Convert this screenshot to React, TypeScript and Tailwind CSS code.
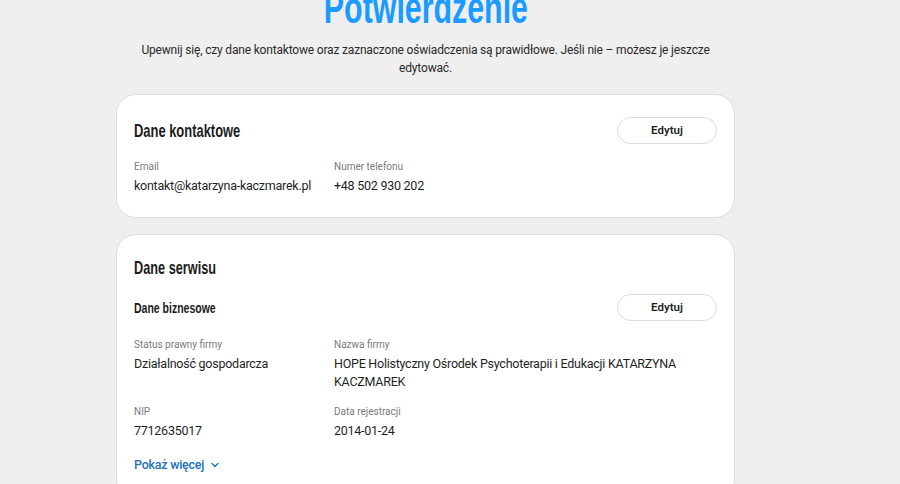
import React from 'react';
import { ChevronDown } from 'lucide-react';

const headingFont = "font-['Liberation_Sans','Arial',sans-serif] font-bold";
const body = "font-['Roboto','Liberation_Sans',sans-serif]";

const Field: React.FC<{ label: string; value: string }> = ({ label, value }) => (
  <div>
    <div className="text-[10px] text-[#7a7a7a] leading-[14px]">{label}</div>
    <div className="mt-[3px] text-[12.5px] tracking-[-0.02em] text-[#1f1f1f] leading-[18px]">{value}</div>
  </div>
);

const EditButton: React.FC = () => (
  <button className="h-[27px] w-[100px] rounded-full border border-[#dcdcdc] bg-white text-[11.5px] font-semibold text-[#1f1f1f]">
    Edytuj
  </button>
);

const App: React.FC = () => {
  return (
    <div className={`h-[484px] overflow-hidden bg-[#efefef] ${body}`}>
      <div className="ml-[116px] w-[619px] -mt-[16px]">
        <h1 className="text-center text-[44px] leading-[48px]">
          <span className={`inline-block origin-center scale-x-[0.69] ${headingFont} text-[#1b9bff]`}>Potwierdzenie</span>
        </h1>
        <p className="mt-[9px] px-[12px] text-center text-[12px] tracking-[-0.015em] leading-[18px] text-[#2a2a2a]">
          Upewnij się, czy dane kontaktowe oraz zaznaczone oświadczenia są prawidłowe. Jeśli nie – możesz je jeszcze edytować.
        </p>

        <section className="mt-[17px] rounded-[20px] border border-[#dcdcdc] bg-white px-[17px] pt-[22px] pb-[22px]">
          <div className="flex items-center justify-between">
            <h2 className="text-[19px] leading-[27px]">
              <span className={`inline-block origin-left scale-x-[0.68] whitespace-nowrap ${headingFont} text-[#1c1c1c]`}>Dane kontaktowe</span>
            </h2>
            <EditButton />
          </div>
          <div className="mt-[16px] grid grid-cols-[200px_1fr]">
            <Field label="Email" value="kontakt@katarzyna-kaczmarek.pl" />
            <Field label="Numer telefonu" value="+48 502 930 202" />
          </div>
        </section>

        <section className="mt-[16px] rounded-[20px] border border-[#dcdcdc] bg-white px-[17px] pt-[19px] pb-[24px]">
          <h2 className="text-[19px] leading-[28px]">
            <span className={`inline-block origin-left scale-x-[0.67] whitespace-nowrap ${headingFont} text-[#1c1c1c]`}>Dane serwisu</span>
          </h2>
          <div className="mt-[12px] flex items-center justify-between">
            <h3 className="text-[15px] leading-[22px]">
              <span className={`inline-block origin-left scale-x-[0.70] whitespace-nowrap ${headingFont} text-[#1c1c1c]`}>Dane biznesowe</span>
            </h3>
            <EditButton />
          </div>
          <div className="mt-[17px] grid grid-cols-[200px_1fr] gap-y-[14px]">
            <Field label="Status prawny firmy" value="Działalność gospodarcza" />
            <Field label="Nazwa firmy" value="HOPE Holistyczny Ośrodek Psychoterapii i Edukacji KATARZYNA KACZMAREK" />
            <Field label="NIP" value="7712635017" />
            <Field label="Data rejestracji" value="2014-01-24" />
          </div>
          <button className="mt-[16px] flex items-center gap-[5px] text-[12.5px] tracking-[-0.02em] leading-[18px] font-medium text-[#1d72b8]">
            Pokaż więcej
            <ChevronDown size={12} strokeWidth={2.5} />
          </button>
        </section>
      </div>
    </div>
  );
};

export default App;
